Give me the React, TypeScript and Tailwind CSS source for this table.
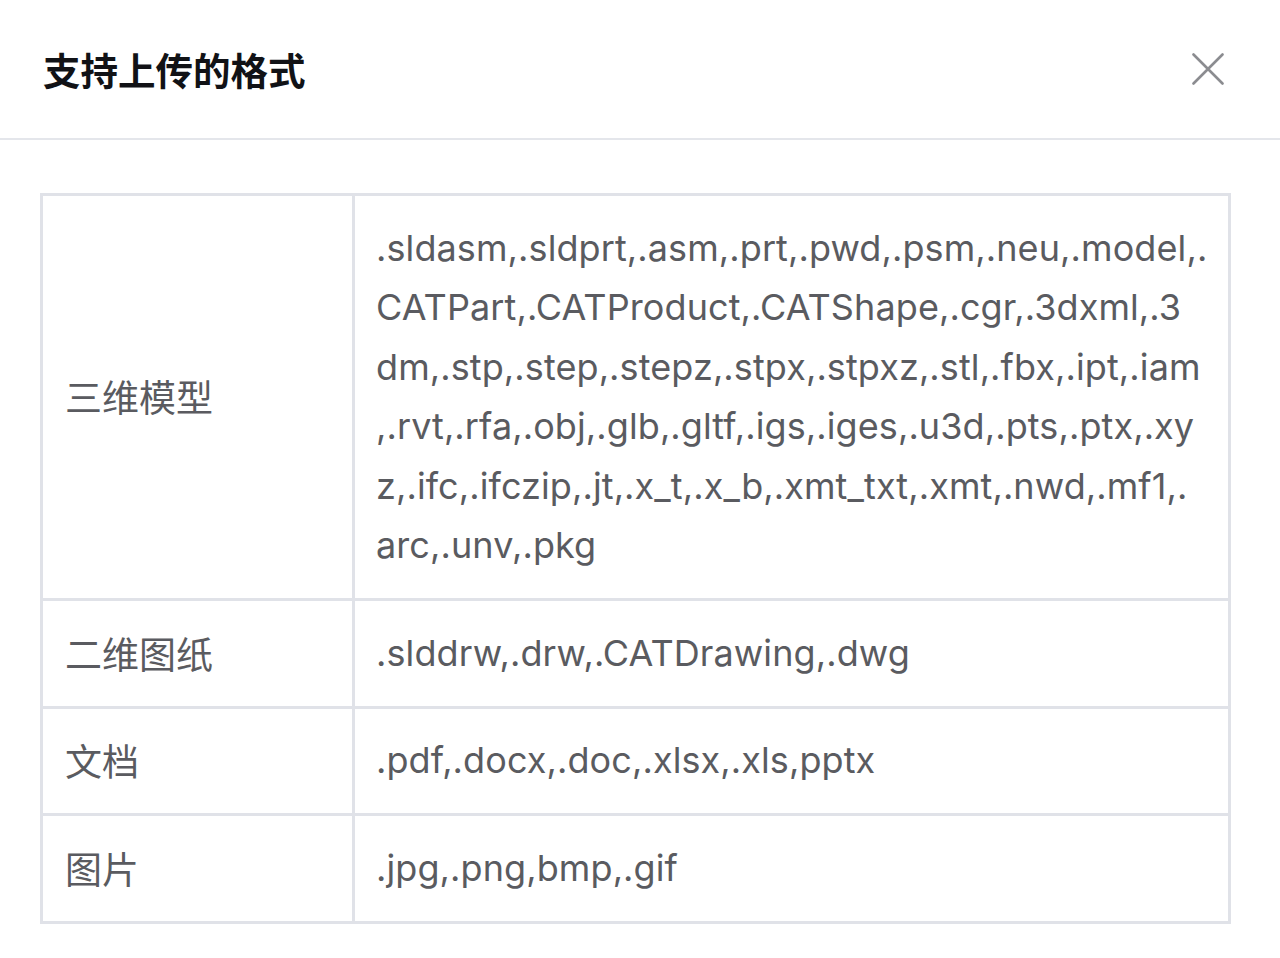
import React from "react";

const rows: { label: string; lines: string[] }[] = [
  {
    label: "三维模型",
    lines: [
      ".sldasm,.sldprt,.asm,.prt,.pwd,.psm,.neu,.model,.",
      "CATPart,.CATProduct,.CATShape,.cgr,.3dxml,.3",
      "dm,.stp,.step,.stepz,.stpx,.stpxz,.stl,.fbx,.ipt,.iam",
      ",.rvt,.rfa,.obj,.glb,.gltf,.igs,.iges,.u3d,.pts,.ptx,.xy",
      "z,.ifc,.ifczip,.jt,.x_t,.x_b,.xmt_txt,.xmt,.nwd,.mf1,.",
      "arc,.unv,.pkg",
    ],
  },
  { label: "二维图纸", lines: [".slddrw,.drw,.CATDrawing,.dwg"] },
  { label: "文档", lines: [".pdf,.docx,.doc,.xlsx,.xls,pptx"] },
  { label: "图片", lines: [".jpg,.png,bmp,.gif"] },
];

function CloseIcon() {
  return (
    <svg width="32" height="32" viewBox="0 0 32 32" fill="none">
      <path
        d="M1.5 1.5L30.5 30.5M30.5 1.5L1.5 30.5"
        stroke="#8b8c90"
        strokeWidth="2.6"
        strokeLinecap="round"
      />
    </svg>
  );
}

export default function App() {
  return (
    <div className="w-[1280px] h-[958px] bg-white font-['Inter','Noto_Sans_CJK_SC',sans-serif]">
      <div className="h-[140px] flex items-center justify-between pl-[43px] pr-[56px] border-b-[2px] border-[#e4e6eb]">
        <h1 className="text-[37.5px] font-bold text-[#111216] font-['Noto_Sans_CJK_SC',sans-serif]">
          支持上传的格式
        </h1>
        <button>
          <CloseIcon />
        </button>
      </div>
      <div className="px-[40px] pt-[53px]">
        <div className="border-[3px] border-[#e0e2e8] w-[1191px]">
          {rows.map((row, i) => (
            <div
              key={row.label}
              className={`grid grid-cols-[312px_1fr] ${i > 0 ? "border-t-[3px] border-[#e0e2e8]" : ""}`}
            >
              <div className="flex items-center pl-[22px] border-r-[3px] border-[#e0e2e8] text-[37px] text-[#5a5b60] font-['Noto_Sans_CJK_SC',sans-serif]">
                {row.label}
              </div>
              <div className="py-[22.5px] pl-[21px] pr-[20px] text-[36px] tracking-[0.1px] leading-[59.5px] text-[#5a5b60]">
                {row.lines.map((l) => (
                  <div key={l} className="whitespace-nowrap">
                    {l}
                  </div>
                ))}
              </div>
            </div>
          ))}
        </div>
      </div>
    </div>
  );
}
